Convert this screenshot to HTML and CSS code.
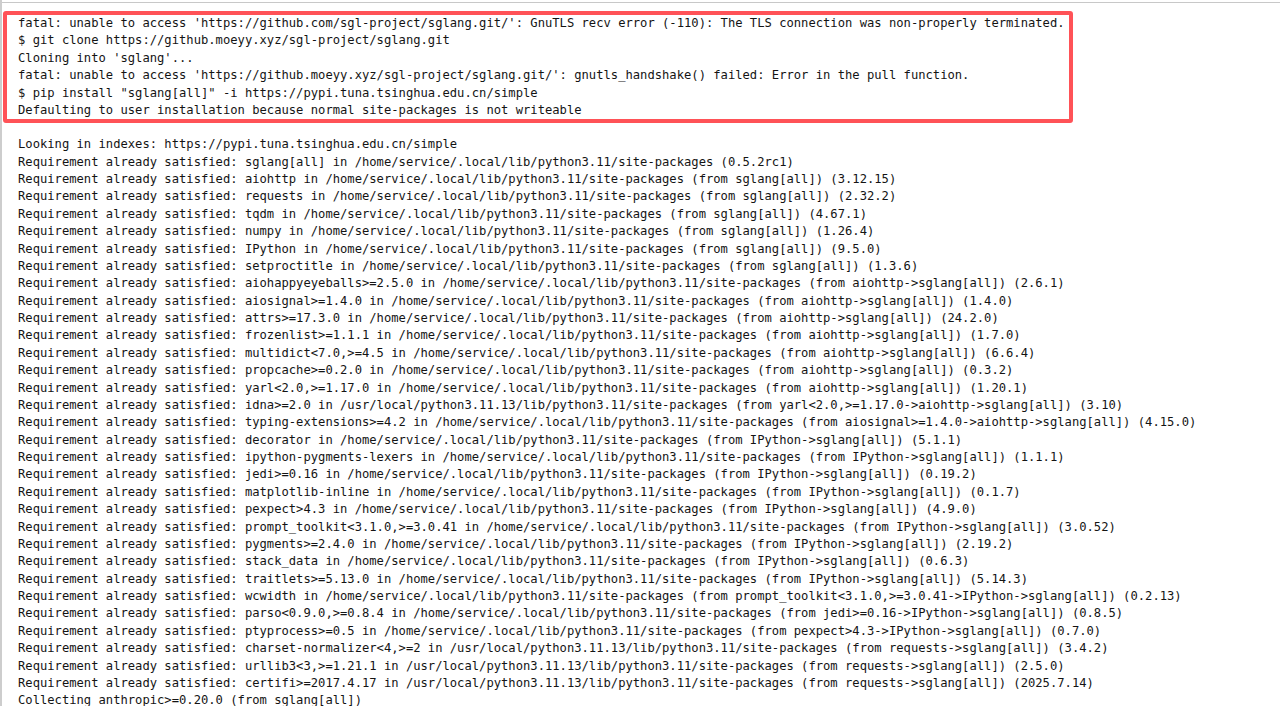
FILE: index.html
```html
<!DOCTYPE html>
<html lang="en">
<head>
<meta charset="utf-8">
<title>Terminal log</title>
<link rel="stylesheet" href="styles.css">
</head>
<body>
<div class="frame">
<pre class="cmd-box">fatal: unable to access 'https://github.com/sgl-project/sglang.git/': GnuTLS recv error (-110): The TLS connection was non-properly terminated.
$ git clone https://github.moeyy.xyz/sgl-project/sglang.git
Cloning into 'sglang'...
fatal: unable to access 'https://github.moeyy.xyz/sgl-project/sglang.git/': gnutls_handshake() failed: Error in the pull function.
$ pip install "sglang[all]" -i https://pypi.tuna.tsinghua.edu.cn/simple
Defaulting to user installation because normal site-packages is not writeable</pre>
<pre class="log">Looking in indexes: https://pypi.tuna.tsinghua.edu.cn/simple
Requirement already satisfied: sglang[all] in /home/service/.local/lib/python3.11/site-packages (0.5.2rc1)
Requirement already satisfied: aiohttp in /home/service/.local/lib/python3.11/site-packages (from sglang[all]) (3.12.15)
Requirement already satisfied: requests in /home/service/.local/lib/python3.11/site-packages (from sglang[all]) (2.32.2)
Requirement already satisfied: tqdm in /home/service/.local/lib/python3.11/site-packages (from sglang[all]) (4.67.1)
Requirement already satisfied: numpy in /home/service/.local/lib/python3.11/site-packages (from sglang[all]) (1.26.4)
Requirement already satisfied: IPython in /home/service/.local/lib/python3.11/site-packages (from sglang[all]) (9.5.0)
Requirement already satisfied: setproctitle in /home/service/.local/lib/python3.11/site-packages (from sglang[all]) (1.3.6)
Requirement already satisfied: aiohappyeyeballs>=2.5.0 in /home/service/.local/lib/python3.11/site-packages (from aiohttp->sglang[all]) (2.6.1)
Requirement already satisfied: aiosignal>=1.4.0 in /home/service/.local/lib/python3.11/site-packages (from aiohttp->sglang[all]) (1.4.0)
Requirement already satisfied: attrs>=17.3.0 in /home/service/.local/lib/python3.11/site-packages (from aiohttp->sglang[all]) (24.2.0)
Requirement already satisfied: frozenlist>=1.1.1 in /home/service/.local/lib/python3.11/site-packages (from aiohttp->sglang[all]) (1.7.0)
Requirement already satisfied: multidict&lt;7.0,>=4.5 in /home/service/.local/lib/python3.11/site-packages (from aiohttp->sglang[all]) (6.6.4)
Requirement already satisfied: propcache>=0.2.0 in /home/service/.local/lib/python3.11/site-packages (from aiohttp->sglang[all]) (0.3.2)
Requirement already satisfied: yarl&lt;2.0,>=1.17.0 in /home/service/.local/lib/python3.11/site-packages (from aiohttp->sglang[all]) (1.20.1)
Requirement already satisfied: idna>=2.0 in /usr/local/python3.11.13/lib/python3.11/site-packages (from yarl&lt;2.0,>=1.17.0->aiohttp->sglang[all]) (3.10)
Requirement already satisfied: typing-extensions>=4.2 in /home/service/.local/lib/python3.11/site-packages (from aiosignal>=1.4.0->aiohttp->sglang[all]) (4.15.0)
Requirement already satisfied: decorator in /home/service/.local/lib/python3.11/site-packages (from IPython->sglang[all]) (5.1.1)
Requirement already satisfied: ipython-pygments-lexers in /home/service/.local/lib/python3.11/site-packages (from IPython->sglang[all]) (1.1.1)
Requirement already satisfied: jedi>=0.16 in /home/service/.local/lib/python3.11/site-packages (from IPython->sglang[all]) (0.19.2)
Requirement already satisfied: matplotlib-inline in /home/service/.local/lib/python3.11/site-packages (from IPython->sglang[all]) (0.1.7)
Requirement already satisfied: pexpect>4.3 in /home/service/.local/lib/python3.11/site-packages (from IPython->sglang[all]) (4.9.0)
Requirement already satisfied: prompt_toolkit&lt;3.1.0,>=3.0.41 in /home/service/.local/lib/python3.11/site-packages (from IPython->sglang[all]) (3.0.52)
Requirement already satisfied: pygments>=2.4.0 in /home/service/.local/lib/python3.11/site-packages (from IPython->sglang[all]) (2.19.2)
Requirement already satisfied: stack_data in /home/service/.local/lib/python3.11/site-packages (from IPython->sglang[all]) (0.6.3)
Requirement already satisfied: traitlets>=5.13.0 in /home/service/.local/lib/python3.11/site-packages (from IPython->sglang[all]) (5.14.3)
Requirement already satisfied: wcwidth in /home/service/.local/lib/python3.11/site-packages (from prompt_toolkit&lt;3.1.0,>=3.0.41->IPython->sglang[all]) (0.2.13)
Requirement already satisfied: parso&lt;0.9.0,>=0.8.4 in /home/service/.local/lib/python3.11/site-packages (from jedi>=0.16->IPython->sglang[all]) (0.8.5)
Requirement already satisfied: ptyprocess>=0.5 in /home/service/.local/lib/python3.11/site-packages (from pexpect>4.3->IPython->sglang[all]) (0.7.0)
Requirement already satisfied: charset-normalizer&lt;4,>=2 in /usr/local/python3.11.13/lib/python3.11/site-packages (from requests->sglang[all]) (3.4.2)
Requirement already satisfied: urllib3&lt;3,>=1.21.1 in /usr/local/python3.11.13/lib/python3.11/site-packages (from requests->sglang[all]) (2.5.0)
Requirement already satisfied: certifi>=2017.4.17 in /usr/local/python3.11.13/lib/python3.11/site-packages (from requests->sglang[all]) (2025.7.14)
Collecting anthropic>=0.20.0 (from sglang[all])</pre>
</div>
</body>
</html>
```

FILE: styles.css
```css
html, body {
  margin: 0;
  padding: 0;
  background: #ffffff;
}

body {
  height: 706px;
  overflow: hidden;
  border-left: 2px solid #cdcdcd;
  box-sizing: border-box;
}

.frame {
  margin-top: 2px;
  border-top: 1px solid #c8c8c8;
}

.cmd-box,
.log {
  font-family: "DejaVu Sans Mono", "Liberation Mono", monospace;
  font-size: 12.16px;
  line-height: 17.375px;
  color: #141414;
  white-space: pre;
}

.cmd-box {
  box-sizing: border-box;
  width: 1070px;
  margin: 8px 0 0 1px;
  padding: 0 0 0 11px;
  border: 4px solid #ff5257;
  border-radius: 3px;
}

.log {
  margin: 13px 0 0 0;
  padding-left: 16px;
}
```
